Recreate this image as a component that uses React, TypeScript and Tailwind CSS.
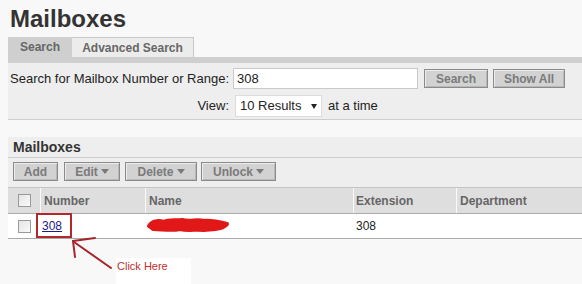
import React from 'react';

const Caret = () => (
  <span className="ml-[3px] inline-block w-0 h-0 border-l-[4px] border-r-[4px] border-t-[5px] border-l-transparent border-r-transparent border-t-[#7a7a7a]" />
);

const Btn: React.FC<{ w: string; label: string; caret?: boolean }> = ({ w, label, caret }) => (
  <div
    className={`${w} h-[19px] flex items-center justify-center border border-[#8a8a8a] bg-[#d2d2d2] shadow-[inset_1px_1px_0_#ececec,inset_-1px_-1px_0_#b8b8b8] text-[12px] font-bold text-[#7a7a7a] leading-none`}
  >
    <span>{label}</span>
    {caret && <Caret />}
  </div>
);

const Check = () => (
  <div className="w-[13px] h-[13px] border border-[#9a9a9a] bg-gradient-to-br from-[#e4e4e4] to-[#fafafa]" />
);

export default function App() {
  return (
    <div className="relative w-[582px] h-[284px] overflow-hidden bg-[#f8f8f8] font-['Liberation_Sans',Arial,sans-serif]">
      {/* Titulo */}
      <div className="pl-[10px] pt-[5px] h-[33px] text-[24px] font-bold leading-[28px] text-[#333]">Mailboxes</div>

      {/* Abas */}
      <div className="ml-[8px] mt-[4px] flex h-[20px]">
        <div className="w-[64px] bg-[#cfcfcf] flex items-center justify-center text-[12px] font-bold text-[#666]">Search</div>
        <div className="w-[122px] bg-[#ececec] border-t border-r border-[#c8c8c8] flex items-center justify-center text-[12px] font-bold text-[#666]">
          Advanced Search
        </div>
      </div>
      <div className="ml-[8px] h-[6px] bg-[#cfcfcf]" />

      {/* Painel de busca */}
      <div className="ml-[8px] h-[57px] bg-[#eeeeee] border-b border-[#cdcdcd] pt-[5px] pl-[5px] text-[13px] text-[#222]">
        <div className="flex items-center h-[21px]">
          <div className="w-[216px] shrink-0 flex justify-end whitespace-nowrap">Search for Mailbox Number or Range:</div>
          <div className="ml-[4px] w-[185px] h-[21px] bg-white border border-[#cacaca] flex items-center pl-[3px]">308</div>
          <div className="ml-[6px]"><Btn w="w-[64px]" label="Search" /></div>
          <div className="ml-[5px]"><Btn w="w-[72px]" label="Show All" /></div>
        </div>
        <div className="flex items-center h-[22px] mt-[6px]">
          <div className="w-[216px] shrink-0 flex justify-end">View:</div>
          <div className="ml-[6px] w-[87px] h-[22px] bg-white border border-[#dcdcdc] flex items-center pl-[4px]">
            <span>10 Results</span>
            <span className="ml-[10px] inline-block w-0 h-0 border-l-[3px] border-r-[3px] border-t-[5px] border-l-transparent border-r-transparent border-t-[#222]" />
          </div>
          <div className="ml-[6px]">at a time</div>
        </div>
      </div>

      {/* Painel de caixas postais */}
      <div className="ml-[8px] mt-[17px]">
        <div className="h-[21px] bg-[#eeeeee] border-b border-[#cdcdcd] pl-[5px] flex items-center text-[14px] font-bold text-[#333]">
          Mailboxes
        </div>
        <div className="h-[30px] bg-[#eeeeee] border-b border-[#c4c4c4] pl-[5px] pt-[4px] flex gap-[6px]">
          <Btn w="w-[45px]" label="Add" />
          <Btn w="w-[56px]" label="Edit" caret />
          <div className="-ml-[1px]"><Btn w="w-[72px]" label="Delete" caret /></div>
          <div className="-ml-[2px]"><Btn w="w-[75px]" label="Unlock" caret /></div>
        </div>
        <div className="h-[26px] bg-[#dedede] border-b border-[#ababab] flex text-[12px] font-bold text-[#666]">
          <div className="w-[32px] flex items-center justify-center"><Check /></div>
          <div className="w-[105px] border-l border-[#fafafa] pl-[3px] flex items-center">Number</div>
          <div className="w-[208px] border-l border-[#fafafa] pl-[3px] flex items-center">Name</div>
          <div className="w-[103px] border-l border-[#fafafa] pl-[2px] flex items-center">Extension</div>
          <div className="flex-1 border-l border-[#fafafa] pl-[3px] flex items-center">Department</div>
        </div>
        <div className="h-[25px] bg-white border-b border-[#a8a8a8] flex text-[12px] text-[#222]">
          <div className="w-[32px] flex items-center justify-center"><Check /></div>
          <div className="w-[105px] pl-[2px] flex items-center">
            <span className="underline text-[#1c1c8c]">308</span>
          </div>
          <div className="w-[208px]" />
          <div className="w-[103px] pl-[3px] flex items-center">308</div>
          <div className="flex-1" />
        </div>
      </div>

      {/* Anotacoes */}
      <svg className="absolute left-0 top-0" width="582" height="284" viewBox="0 0 582 284">
        <path
          d="M149 226 C152 221 158 220 164 222 C170 219 176 221 182 220 C190 222 197 219 204 221 C211 220 219 222 227 224 C222 230 212 229 204 230 C196 229 188 231 180 229 C171 231 162 229 153 229 Z"
          fill="#e01818"
          stroke="#e01818"
          strokeWidth="4"
          strokeLinejoin="round"
        />
        <rect x="37" y="214" width="34" height="23" fill="none" stroke="#b3262c" strokeWidth="2" />
        <g stroke="#a8232a" strokeWidth="2" fill="none" strokeLinecap="round">
          <line x1="74" y1="242" x2="111" y2="268" />
          <line x1="73" y1="241" x2="95" y2="238" />
          <line x1="73" y1="241" x2="75" y2="257" />
        </g>
      </svg>
      <div className="absolute left-[116px] top-[258px] w-[75px] h-[26px] bg-white pt-[1px] pl-[1px] text-[11px] leading-[14px] text-[#c0302c]">
        Click Here
      </div>
    </div>
  );
}
